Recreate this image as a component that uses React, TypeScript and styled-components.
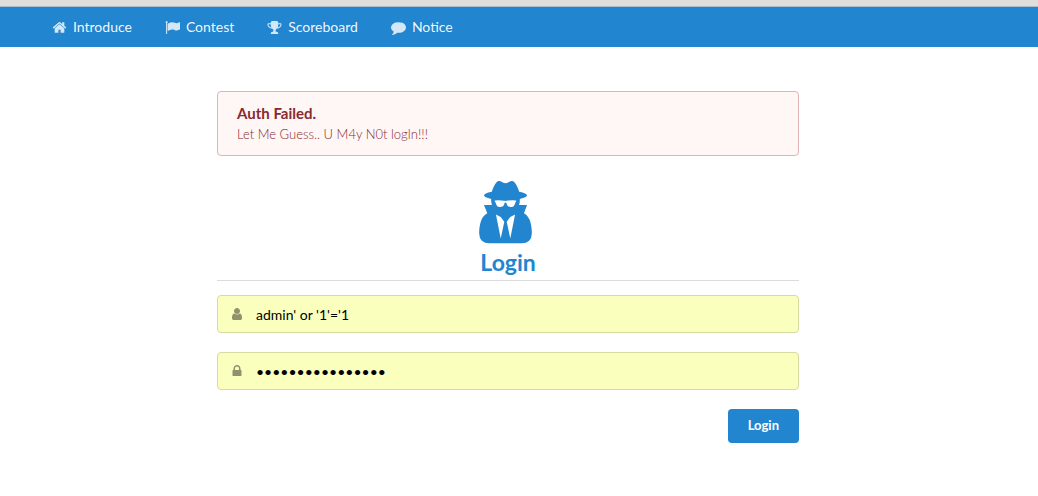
import React from "react";
import styled, { createGlobalStyle } from "styled-components";

const GlobalStyle = createGlobalStyle`
  *, *::before, *::after { box-sizing: border-box; }
  body {
    margin: 0;
    background: #fff;
    color: #222;
    font-family: Lato, "Liberation Sans", sans-serif;
    font-size: 14px;
    line-height: 20px;
  }
`;

const TopEdge = styled.div`
  height: 7px;
  background: #e0dedd;
  border-bottom: 1px solid #a9bccb;
`;

const Nav = styled.nav`
  display: flex;
  gap: 1px;
  min-height: 40px;
  padding: 0 36px;
  background: #2185d0;
`;

const NavLink = styled.a`
  display: flex;
  align-items: center;
  gap: 6px;
  padding: 0 16px;
  color: rgba(255, 255, 255, 0.95);
  text-decoration: none;
`;

const Icon = styled.svg<{ $size: number }>`
  display: block;
  flex: none;
  width: ${(p) => p.$size}px;
  height: ${(p) => p.$size}px;
  fill: currentColor;
`;

const NavIcon = styled(Icon)`
  opacity: 0.85;
`;

const Main = styled.main`
  display: flex;
  justify-content: center;
  padding: 44px 22px 44px 0;
`;

const Column = styled.div`
  width: 100%;
  max-width: 582px;
`;

const Message = styled.section`
  padding: 11px 19px 9px;
  border: 1px solid #e0b4b4;
  border-radius: 4px;
  background: #fff6f6;
  color: #862b2e;
`;

const MessageTitle = styled.h2`
  margin: 0;
  font-size: 15px;
  line-height: 20px;
  font-weight: 700;
`;

const MessageText = styled.p`
  margin: 0;
  font-size: 13px;
  line-height: 23px;
  font-weight: 300;
`;

const Heading = styled.h1`
  display: flex;
  flex-direction: column;
  align-items: center;
  margin: 25px 0 14px;
  padding-bottom: 4px;
  border-bottom: 1px solid #dbdbdc;
  color: #2185d0;
  font-size: 23px;
  line-height: 28px;
  font-weight: 700;
`;

const HeadingIcon = styled(Icon)`
  margin-right: 5px;
`;

const Form = styled.form`
  display: flex;
  flex-direction: column;
  gap: 19px;
`;

const Field = styled.label`
  display: flex;
  align-items: center;
  gap: 12px;
  height: 38px;
  padding: 0 12px;
  border: 1px solid #d6dba0;
  border-radius: 4px;
  background: #faffbd;
`;

const FieldIcon = styled(Icon)`
  color: #8f926c;
`;

const Input = styled.input`
  flex: 1;
  min-width: 0;
  padding: 2px 0 0;
  border: 0;
  outline: 0;
  background: transparent;
  color: #000;
  font: inherit;
`;

const Submit = styled.button`
  align-self: flex-end;
  height: 34px;
  padding: 0 20px 2px;
  border: 0;
  border-radius: 4px;
  background: #2185d0;
  color: #fff;
  font: inherit;
  font-size: 13px;
  font-weight: 700;
`;

const paths = {
  home: "M1472 992v480q0 26-19 45t-45 19h-384v-384h-256v384h-384q-26 0-45-19t-19-45v-480q0-1 .5-3t.5-3l575-474 575 474q1 2 1 6zm223-69l-62 74q-8 9-21 11h-3q-13 0-21-7l-692-577-692 577q-12 8-24 7-13-2-21-11l-62-74q-8-10-7-23.5t11-21.5l719-599q32-26 76-26t76 26l244 204v-195q0-14 9-23t23-9h192q14 0 23 9t9 23v408l219 182q10 8 11 21.5t-7 23.5z",
  flag: "M320 256q0 72-64 110v1266q0 13-9.5 22.5t-22.5 9.5h-64q-13 0-22.5-9.5t-9.5-22.5v-1266q-64-38-64-110 0-53 37.5-90.5t90.5-37.5 90.5 37.5 37.5 90.5zm1472 64v763q0 25-12.5 38.5t-39.5 27.5q-215 116-369 116-61 0-123.5-22t-108.5-48-115.5-48-142.5-22q-192 0-464 146-17 9-33 9-26 0-45-19t-19-45v-742q0-32 31-55 21-14 79-43 236-120 421-120 107 0 200 29t219 88q38 19 88 19 54 0 117.5-21t110-47 88-47 54.5-21q26 0 45 19t19 45z",
  trophy: "M522 883q-74-162-74-371h-256v96q0 78 94.5 162t235.5 113zm1078-275v-96h-256q0 209-74 371 141-29 235.5-113t94.5-162zm128-128v128q0 71-41.5 143t-112 130-173 97.5-215.5 44.5q-42 54-95 95-38 34-52.5 72.5t-14.5 89.5q0 54 30.5 91t97.5 37q75 0 133.5 45.5t58.5 114.5v64q0 14-9 23t-23 9h-832q-14 0-23-9t-9-23v-64q0-69 58.5-114.5t133.5-45.5q67 0 97.5-37t30.5-91q0-51-14.5-89.5t-52.5-72.5q-53-41-95-95-113-5-215.5-44.5t-173-97.5-112-130-41.5-143v-128q0-40 28-68t68-28h288v-96q0-66 47-113t113-47h576q66 0 113 47t47 113v96h288q40 0 68 28t28 68z",
  comment: "M1792 896q0 174-120 321.5t-326 233-450 85.5q-70 0-145-8-198 175-460 242-49 14-114 22-17 2-30.5-9t-17.5-29v-1q-3-4-.5-12t2-10 4.5-9.5l6-9 7-8.5 8-9q7-8 31-34.5t34.5-38 31-39.5 32.5-51 27-59 26-76q-157-89-247.5-220t-90.5-281q0-130 71-248.5t191-204.5 286-136.5 348-50.5q244 0 450 85.5t326 233 120 321.5z",
  user: "M1536 1399q0 109-62.5 187t-150.5 78h-854q-88 0-150.5-78t-62.5-187q0-85 8.5-160.5t31.5-152 58.5-131 94-89 134.5-34.5q131 128 313 128t313-128q76 0 134.5 34.5t94 89 58.5 131 31.5 152 8.5 160.5zm-256-887q0 159-112.5 271.5t-271.5 112.5-271.5-112.5-112.5-271.5 112.5-271.5 271.5-112.5 271.5 112.5 112.5 271.5z",
  lock: "M640 768h512v-192q0-106-75-181t-181-75-181 75-75 181v192zm832 96v576q0 40-28 68t-68 28h-960q-40 0-68-28t-28-68v-576q0-40 28-68t68-28h32v-192q0-184 132-316t316-132 316 132 132 316v192h32q40 0 68 28t28 68z",
  spy: "M576 1536l96-448-96-128-128-64zM832 1536l128-640-128 64-96 128zM992 526q-2-4-4-6-10-8-96-8-70 0-167 19-7 2-21 2t-21-2q-97-19-167-19-86 0-96 8-2 2-4 6 2 18 4 27 2 3 7.5 6.5t7.5 10.5q2 4 7.5 20.5t7 20.5 7.5 17 8.5 17 9 14 12 13.5 14 9.5 17.5 8 20.5 4 24.5 2q36 0 59-12.5t32.5-30 14.5-34.5 11.5-29.5 17.5-12.5h12q11 0 17.5 12.5t11.5 29.5 14.5 34.5 32.5 30 59 12.5q13 0 24.5-2t20.5-4 17.5-8 14-9.5 12-13.5 9-14 8.5-17 7.5-17 7-20.5 7.5-20.5q2-7 7.5-10.5t7.5-6.5q2-9 4-27zM1408 1405q0 121-73 190t-194 69h-874q-121 0-194-69t-73-190q0-61 4.5-118t19-125.5 37.5-123.5 63.5-103.5 93.5-74.5l-90-220h214q-22-64-22-128 0-12 2-32-194-40-194-96 0-57 210-99 17-62 51.5-134t70.5-114q32-37 76-37 30 0 84 31t84 31 84-31 84-31q44 0 76 37 36 42 70.5 114t51.5 134q210 42 210 99 0 56-194 96 7 81-20 160h214l-82 225q63 33 107.5 96.5t65.5 143.5 29 151.5 8 157.5z",
};

const links: { label: string; icon: keyof typeof paths }[] = [
  { label: "Introduce", icon: "home" },
  { label: "Contest", icon: "flag" },
  { label: "Scoreboard", icon: "trophy" },
  { label: "Notice", icon: "comment" },
];

export default function App() {
  return (
    <>
      <GlobalStyle />
      <TopEdge />
      <Nav>
        {links.map((link) => (
          <NavLink key={link.label} href="#">
            <NavIcon $size={15} viewBox="0 0 1792 1792" aria-hidden="true">
              <path d={paths[link.icon]} />
            </NavIcon>
            {link.label}
          </NavLink>
        ))}
      </Nav>
      <Main>
        <Column>
          <Message role="alert">
            <MessageTitle>Auth Failed.</MessageTitle>
            <MessageText>Let Me Guess.. U M4y N0t logIn!!!</MessageText>
          </Message>
          <Heading>
            <HeadingIcon $size={67} viewBox="-192 0 1792 1792" aria-hidden="true">
              <path d={paths.spy} fillRule="evenodd" />
            </HeadingIcon>
            Login
          </Heading>
          <Form onSubmit={(e) => e.preventDefault()}>
            <Field>
              <FieldIcon $size={14} viewBox="0 0 1792 1792" aria-hidden="true">
                <path d={paths.user} />
              </FieldIcon>
              <Input type="text" aria-label="Username" defaultValue="admin' or '1'='1" />
            </Field>
            <Field>
              <FieldIcon $size={14} viewBox="0 0 1792 1792" aria-hidden="true">
                <path d={paths.lock} />
              </FieldIcon>
              <Input type="password" aria-label="Password" defaultValue="admin' or '1'='1" />
            </Field>
            <Submit type="submit">Login</Submit>
          </Form>
        </Column>
      </Main>
    </>
  );
}
